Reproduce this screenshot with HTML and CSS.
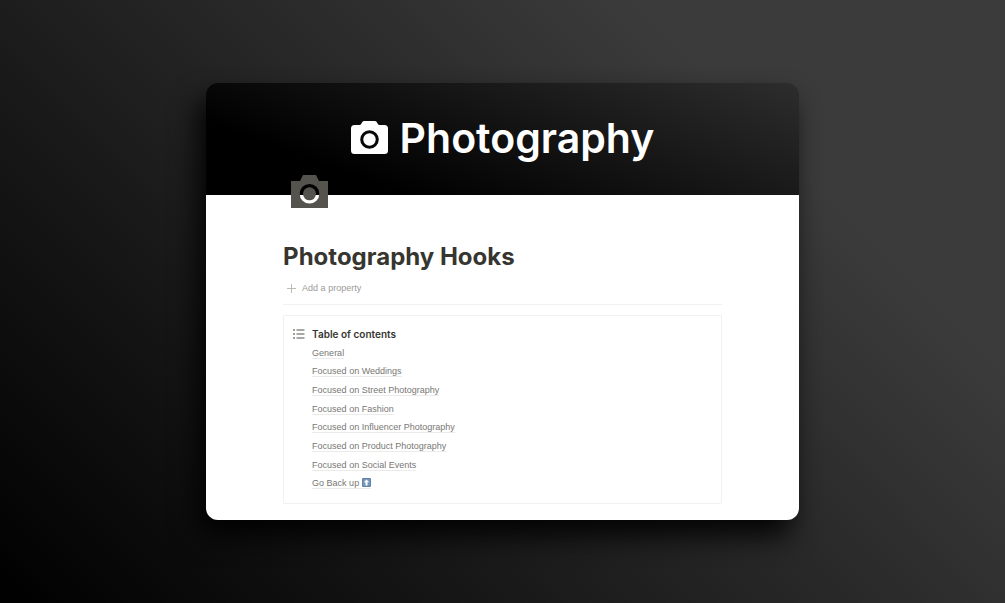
FILE: index.html
```html
<!DOCTYPE html>
<html lang="en">
<head>
<meta charset="utf-8">
<meta name="viewport" content="width=device-width, initial-scale=1">
<title>Photography Hooks</title>
<link rel="stylesheet" href="styles.css">
</head>
<body>
<main class="card">
  <header class="cover">
    <svg class="cover-icon" viewBox="0 0 37 33" aria-hidden="true">
      <path fill="#fff" fill-rule="evenodd" d="M13 0H24Q25.500 0 26 1.500Q27 4 28.500 4H33.500Q37 4 37 7.500V29.500Q37 33 33.500 33H3.500Q0 33 0 29.500V7.500Q0 4 3.500 4H8.500Q10 4 11 1.500Q11.500 0 13 0ZM18.500 9.200a9.300 9.300 0 1 0 0 18.600a9.300 9.300 0 1 0 0-18.600Z"/>
      <circle cx="18.500" cy="18.500" r="6.200" fill="#fff"/>
    </svg>
    <span class="cover-title">Photography</span>
  </header>
  <section class="page">
    <svg class="page-icon" viewBox="0 0 37 33" aria-hidden="true">
      <path fill="#55534e" fill-rule="evenodd" d="M12 0H25L28 6H37V33H0V6H9ZM18.500 9a9.800 9.800 0 1 0 0 19.600a9.800 9.800 0 1 0 0-19.600Z"/>
      <circle cx="18.500" cy="18.800" r="6.500" fill="#55534e"/>
    </svg>
    <h1 class="page-title">Photography Hooks</h1>
    <button class="add-property" type="button">
      <svg class="plus" viewBox="0 0 9 9" aria-hidden="true"><path d="M4.500 0V9M0 4.500H9" stroke="#b4b3b0" stroke-width="0.900"/></svg>
      Add a property
    </button>
    <nav class="contents" aria-labelledby="contents-title">
      <svg class="list-icon" viewBox="0 0 12 10" aria-hidden="true">
        <path d="M3.500 1H11.500M3.500 5H11.500M3.500 9H11.500" stroke="#55534e" stroke-width="1.200"/>
        <path d="M0.300 1H1.800M0.300 5H1.800M0.300 9H1.800" stroke="#55534e" stroke-width="1.400"/>
      </svg>
      <div class="contents-body">
        <h2 class="contents-title" id="contents-title">Table of contents</h2>
        <ul class="links">
          <li><a href="#general">General</a></li>
          <li><a href="#weddings">Focused on Weddings</a></li>
          <li><a href="#street">Focused on Street Photography</a></li>
          <li><a href="#fashion">Focused on Fashion</a></li>
          <li><a href="#influencer">Focused on Influencer Photography</a></li>
          <li><a href="#product">Focused on Product Photography</a></li>
          <li><a href="#social">Focused on Social Events</a></li>
          <li><a href="#top">Go Back up <svg class="up" viewBox="0 0 10 10" role="img" aria-label="up arrow"><rect width="10" height="10" rx="1.500" fill="#58799f"/><rect x="0.700" y="0.700" width="8.600" height="8.600" rx="1" fill="#7596b9"/><path d="M5 1.600L8 4.800H6.100V8.300H3.900V4.800H2Z" fill="#fff"/></svg></a></li>
        </ul>
      </div>
    </nav>
  </section>
</main>
</body>
</html>
```
FILE: styles.css
```css
* {
  box-sizing: border-box;
}

body {
  margin: 0;
  min-height: 100vh;
  display: flex;
  align-items: center;
  justify-content: center;
  font-family: Inter, "Liberation Sans", sans-serif;
  background: linear-gradient(45deg, #000 0%, #3b3b3b 77%, #3b3b3b 100%);
}

.card {
  width: 59%;
  border-radius: 12px;
  box-shadow: -8px 16px 28px rgba(0, 0, 0, 0.9);
}

.cover {
  display: flex;
  align-items: center;
  justify-content: center;
  gap: 12px;
  height: 112px;
  padding-bottom: 3px;
  border-radius: 12px 12px 0 0;
  background: linear-gradient(20deg, #000 22%, #2d2d2d 100%);
}

.cover-icon {
  width: 37px;
  height: 33px;
}

.cover-title {
  color: #fff;
  font-size: 41px;
  font-weight: 600;
  line-height: 48px;
}

.page {
  display: flow-root;
  padding: 0 13% 16px;
  border-radius: 0 0 12px 12px;
  background: #fff;
}

.page-icon {
  position: relative;
  display: block;
  width: 37px;
  height: 33px;
  margin: -20px 0 0 8px;
}

.page-title {
  margin: 33px 0 0;
  color: #37352f;
  font-size: 24px;
  font-weight: 700;
  line-height: 32px;
}

.add-property {
  display: flex;
  align-items: center;
  gap: 6px;
  width: 100%;
  padding: 8px 4px;
  border: 0;
  border-bottom: 1px solid #f1f1f0;
  background: none;
  color: #9b9a97;
  font: 400 9px/15px "Liberation Sans", Arial, sans-serif;
}

.plus {
  width: 9px;
  height: 9px;
}

.contents {
  display: flex;
  gap: 7px;
  margin-top: 10px;
  padding: 10px 9px;
  border: 1px solid #f1f1f0;
  border-radius: 1px;
}

.list-icon {
  width: 12px;
  height: 10px;
  margin-top: 3px;
}

.contents-title {
  margin: 0 0 2px;
  color: #37352f;
  font-size: 10px;
  font-weight: 600;
  line-height: 16px;
}

.links {
  display: grid;
  grid-auto-rows: 1fr;
  align-items: center;
  min-height: 149px;
  margin: 0;
  padding: 0;
  list-style: none;
  font-family: "Liberation Sans", Arial, sans-serif;
  font-size: 9px;
  line-height: 15px;
}

.links a {
  color: #787774;
  text-decoration: none;
  border-bottom: 1px solid #ebebe9;
}

.up {
  width: 9px;
  height: 9px;
  vertical-align: -1px;
}
```
